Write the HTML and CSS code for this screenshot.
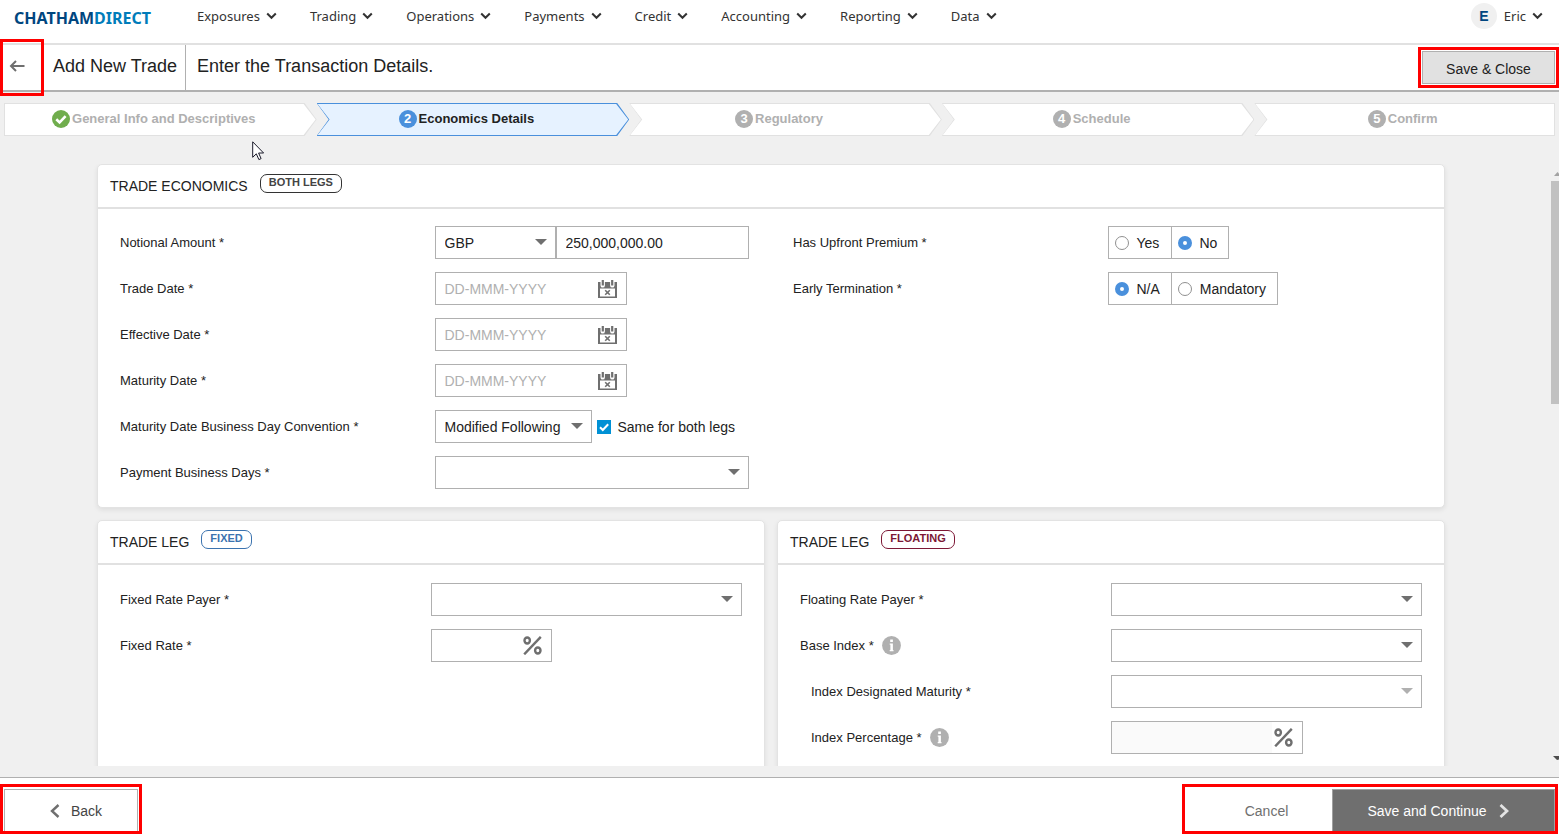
FILE: index.html
```html
<!DOCTYPE html>
<html lang="en">
<head>
<meta charset="utf-8">
<title>Add New Trade</title>
<link rel="stylesheet" href="styles.css">
</head>
<body>
<svg class="defs" aria-hidden="true">
  <symbol id="chev" viewBox="0 0 11 8"><path d="M1.2 1.5 5.5 5.8 9.8 1.5" fill="none" stroke="currentColor" stroke-width="2"/></symbol>
  <symbol id="cal" viewBox="0 0 19 18">
    <path d="M0 2h19v16H0z" fill="#6f6f6f"/>
    <path d="M2 8.500h15v8H2z" fill="#fff"/>
    <path d="M2.500 2h4.400v3.400a2.200 2.200 0 0 1-4.400 0zM12.100 2h4.400v3.400a2.200 2.200 0 0 1-4.400 0z" fill="#fff"/>
    <path d="M3.700 0h2.200v5.500H3.700zM13.100 0h2.200v5.500h-2.200z" fill="#6f6f6f"/>
    <path d="M7.200 10.200l4.600 4.600M11.800 10.200l-4.600 4.600" stroke="#6f6f6f" stroke-width="1.600"/>
  </symbol>
  <symbol id="pct" viewBox="0 0 19 19"><g fill="none" stroke="#6f6f6f" stroke-width="2.400"><ellipse cx="4.200" cy="4.500" rx="2.700" ry="3"/><ellipse cx="14.800" cy="14.500" rx="2.700" ry="3"/><path d="M1.200 18.300 17.800.8"/></g></symbol>
  <symbol id="info" viewBox="0 0 19 19"><circle cx="9.5" cy="9.5" r="9.400" fill="#b0b0b0"/><path d="M8.200 3.600h2.700v2.500H8.200zM7.700 7.600h3.200v6.500h.6v1.200H7.700v-1.200h.7V8.800h-.7z" fill="#fff"/></symbol>
</svg>

<header class="topnav">
  <a class="logo" href="#">CHATHAM<span>DIRECT</span></a>
  <nav class="menu">
    <button type="button">Exposures<svg class="chev"><use href="#chev"/></svg></button>
    <button type="button">Trading<svg class="chev"><use href="#chev"/></svg></button>
    <button type="button">Operations<svg class="chev"><use href="#chev"/></svg></button>
    <button type="button">Payments<svg class="chev"><use href="#chev"/></svg></button>
    <button type="button">Credit<svg class="chev"><use href="#chev"/></svg></button>
    <button type="button">Accounting<svg class="chev"><use href="#chev"/></svg></button>
    <button type="button">Reporting<svg class="chev"><use href="#chev"/></svg></button>
    <button type="button">Data<svg class="chev"><use href="#chev"/></svg></button>
  </nav>
  <div class="user"><span class="avatar">E</span><button type="button">Eric<svg class="chev"><use href="#chev"/></svg></button></div>
</header>

<div class="titlebar">
  <div class="back-arrow marked">
    <button type="button" aria-label="Back"><svg width="16" height="12" viewBox="0 0 16 12"><path d="M15.500 6H2M7 1 2 6l5 5" fill="none" stroke="#6f6f6f" stroke-width="2"/></svg></button>
  </div>
  <h1>Add New Trade</h1>
  <p>Enter the Transaction Details.</p>
  <div class="save-close marked"><button type="button">Save &amp; Close</button></div>
</div>

<main class="page">
  <ol class="steps">
    <li><svg width="18" height="18" viewBox="0 0 18 18"><circle cx="9" cy="9" r="9" fill="#70ad4d"/><path d="M4.300 9.200 7.600 12.400 13.600 6.200" fill="none" stroke="#fff" stroke-width="2.600"/></svg><span>General Info and Descriptives</span></li>
    <li class="current"><b>2</b><span>Economics Details</span></li>
    <li><b>3</b><span>Regulatory</span></li>
    <li><b>4</b><span>Schedule</span></li>
    <li><b>5</b><span>Confirm</span></li>
  </ol>

  <div class="scroller">
    <section class="card">
      <h2>TRADE ECONOMICS <span class="pill">BOTH LEGS</span></h2>
      <div class="fields pair">
        <div class="column">
          <div class="row">
            <label for="amount">Notional Amount *</label>
            <div class="control joined">
              <span class="select w-small"><select aria-label="Currency"><option>GBP</option></select></span>
              <input class="box" id="amount" type="text" value="250,000,000.00">
            </div>
          </div>
          <div class="row">
            <label for="trade">Trade Date *</label>
            <div class="control"><span class="box w-date"><input id="trade" type="text" placeholder="DD-MMM-YYYY"><svg class="cal"><use href="#cal"/></svg></span></div>
          </div>
          <div class="row">
            <label for="effective">Effective Date *</label>
            <div class="control"><span class="box w-date"><input id="effective" type="text" placeholder="DD-MMM-YYYY"><svg class="cal"><use href="#cal"/></svg></span></div>
          </div>
          <div class="row">
            <label for="maturity">Maturity Date *</label>
            <div class="control"><span class="box w-date"><input id="maturity" type="text" placeholder="DD-MMM-YYYY"><svg class="cal"><use href="#cal"/></svg></span></div>
          </div>
          <div class="row">
            <label for="convention">Maturity Date Business Day Convention *</label>
            <div class="control">
              <span class="select w-convention"><select id="convention"><option>Modified Following</option></select></span>
              <label class="check"><input type="checkbox" checked><svg viewBox="0 0 14 14"><path d="M3 7.200 5.800 10 11.200 4.300" fill="none" stroke="#fff" stroke-width="2"/></svg><span>Same for both legs</span></label>
            </div>
          </div>
          <div class="row">
            <label for="days">Payment Business Days *</label>
            <div class="control"><span class="select"><select id="days"><option></option></select></span></div>
          </div>
        </div>
        <div class="column">
          <div class="row" role="radiogroup" aria-labelledby="premium">
            <span id="premium">Has Upfront Premium *</span>
            <div class="control radios">
              <label><input type="radio" name="premium">Yes</label>
              <label><input type="radio" name="premium" checked>No</label>
            </div>
          </div>
          <div class="row" role="radiogroup" aria-labelledby="termination">
            <span id="termination">Early Termination *</span>
            <div class="control radios">
              <label><input type="radio" name="termination" checked>N/A</label>
              <label><input type="radio" name="termination">Mandatory</label>
            </div>
          </div>
        </div>
      </div>
    </section>

    <div class="legs">
      <section class="card">
        <h2>TRADE LEG <span class="pill fixed">FIXED</span></h2>
        <div class="fields">
          <div class="row">
            <label for="fixed-payer">Fixed Rate Payer *</label>
            <div class="control"><span class="select"><select id="fixed-payer"><option></option></select></span></div>
          </div>
          <div class="row">
            <label for="fixed-rate">Fixed Rate *</label>
            <div class="control"><span class="box w-small"><input id="fixed-rate" type="text"><svg class="pct"><use href="#pct"/></svg></span></div>
          </div>
        </div>
      </section>
      <section class="card">
        <h2>TRADE LEG <span class="pill floating">FLOATING</span></h2>
        <div class="fields">
          <div class="row">
            <label for="float-payer">Floating Rate Payer *</label>
            <div class="control"><span class="select"><select id="float-payer"><option></option></select></span></div>
          </div>
          <div class="row">
            <label for="base">Base Index *<svg class="info"><use href="#info"/></svg></label>
            <div class="control"><span class="select"><select id="base"><option></option></select></span></div>
          </div>
          <div class="row nested">
            <label for="designated">Index Designated Maturity *</label>
            <div class="control"><span class="select off"><select id="designated" disabled><option></option></select></span></div>
          </div>
          <div class="row nested">
            <label for="percentage">Index Percentage *<svg class="info"><use href="#info"/></svg></label>
            <div class="control"><span class="box w-date"><input id="percentage" type="text" disabled><svg class="pct"><use href="#pct"/></svg></span></div>
          </div>
        </div>
      </section>
    </div>
    <div class="scrollbar" aria-hidden="true">
      <svg width="8" height="4" viewBox="0 0 8 4"><path d="M3 4 6.500 0 8 1.500V4z" fill="#a3a3a3"/></svg>
      <i></i>
      <svg class="down" width="8" height="4" viewBox="0 0 8 4"><path d="M2 0h6v3.500L6 4z" fill="#4d4d4d"/></svg>
    </div>
  </div>
</main>

<footer class="footer">
  <div class="marked foot-back"><button type="button"><svg width="10" height="14" viewBox="0 0 10 14"><path d="M8.500 1 2 7l6.500 6" fill="none" stroke="#6f6f6f" stroke-width="2.400"/></svg>Back</button></div>
  <div class="marked foot-next"><button type="button" class="cancel">Cancel</button><button type="button" class="primary">Save and Continue<svg width="10" height="14" viewBox="0 0 10 14"><path d="M1.500 1 8 7l-6.500 6" fill="none" stroke="#e3e3e3" stroke-width="2.800"/></svg></button></div>
</footer>

<svg class="pointer" width="13" height="20" viewBox="0 0 13 20" aria-hidden="true"><path d="M.7.800v15.500l3.600-3.500 2.600 5.800 2.200-1-2.500-5.600h5z" fill="#fff" stroke="#1a1a2a" stroke-width="1"/></svg>
</body>
</html>
```

FILE: styles.css
```css
* { box-sizing: border-box; }

body {
  margin: 0;
  height: 100vh;
  display: flex;
  flex-direction: column;
  position: relative;
  overflow: hidden;
  background: #fff;
  color: #222;
  font: 14px/20px "Liberation Sans", Arial, sans-serif;
}

button, input, select { font: inherit; color: inherit; margin: 0; padding: 0; border: 0; background: none; border-radius: 0; }
h1, h2, p, ol { margin: 0; padding: 0; font-weight: normal; }
svg { display: block; flex: none; }
.defs { position: absolute; width: 0; height: 0; }

/* Red frames that call out a control */
.marked { position: relative; }
.marked::after { content: ""; position: absolute; inset: 0; border: 3px solid #f00; pointer-events: none; }

/* Top navigation */
.topnav {
  display: flex;
  align-items: center;
  padding: 0 16px 11px 14px;
  height: 45px;
  border-bottom: 2px solid #e1e1e1;
  font: 13px/20px "Noto Sans", sans-serif;
  color: #333;
}
.logo { flex: none; width: 183px; font-size: 16px; font-weight: 700; color: #00467f; text-decoration: none; padding-top: 3px; }
.logo span { color: #007cba; }
.menu { display: flex; gap: 33px; flex: 1; }
.topnav button { display: flex; align-items: center; gap: 6px; white-space: nowrap; }
.chev { width: 11px; height: 8px; }
.user { display: flex; align-items: center; gap: 7px; }
.avatar { width: 26px; height: 26px; border-radius: 50%; background: #f0f0f0; color: #00467f; font: 700 14px/26px "Liberation Sans", Arial, sans-serif; text-align: center; }

/* Title bar */
.titlebar { display: flex; height: 47px; border-bottom: 2px solid #b0b0b0; font-size: 18px; line-height: 42px; }
.titlebar h1 { font-size: 18px; padding: 0 8px 0 9px; border-right: 1px solid #b0b0b0; }
.titlebar p { padding-left: 11px; flex: 1; }
.back-arrow { width: 44px; z-index: 1; }
.back-arrow button { display: flex; align-items: center; width: 44px; height: 42px; padding-left: 9px; }
.back-arrow::after { inset: -6px 0; }
.save-close { align-self: flex-start; margin-top: 2px; padding: 4px; }
.save-close button { display: block; width: 133px; height: 33px; border: 1px solid #b0b0b0; background: #e1e1e1; font-size: 14px; line-height: 20px; padding-top: 2px; }

/* Stepper */
.page { flex: 1; min-height: 0; display: flex; flex-direction: column; background: #f0f0f0; padding: 11px 0; }
.steps { list-style: none; display: grid; grid-template-columns: repeat(5, 1fr); margin: 0 -8px 28px 4px; font-size: 13px; font-weight: 700; color: #b0b0b0; }
.steps li {
  --edge: #e1e1e1;
  --fill: #fff;
  position: relative;
  z-index: 0;
  display: flex;
  align-items: center;
  justify-content: center;
  gap: 2px;
  height: 33px;
  padding: 0 13px 2px 0;
  background: var(--edge);
  clip-path: polygon(0 0, calc(100% - 12px) 0, 100% 50%, calc(100% - 12px) 100%, 0 100%, 12px 50%);
}
.steps li::before {
  content: "";
  position: absolute;
  z-index: -1;
  inset: 1px;
  background: var(--fill);
  clip-path: polygon(0 0, calc(100% - 12px) 0, 100% 50%, calc(100% - 12px) 100%, 0 100%, 12px 50%);
}
.steps li:first-child, .steps li:first-child::before { clip-path: polygon(0 0, calc(100% - 12px) 0, 100% 50%, calc(100% - 12px) 100%, 0 100%); }
.steps li:last-child { margin-right: 12px; padding: 0 4px 2px 0; }
.steps li:last-child, .steps li:last-child::before { clip-path: polygon(0 0, 100% 0, 100% 100%, 0 100%, 12px 50%); }
.steps .current { --edge: #4a90dc; --fill: #e6f2ff; color: #222; }
.steps b { width: 18px; height: 18px; border-radius: 50%; background: #b0b0b0; color: #fff; line-height: 18px; text-align: center; }
.steps .current b { background: #4a90dc; }

/* Cards */
.scroller { position: relative; flex: 1; min-height: 0; overflow: hidden; padding: 0 114px 0 97px; }
.card { background: #fff; border: 1px solid #e3e3e3; border-radius: 5px; box-shadow: 0 2px 5px rgba(0, 0, 0, .08); }
.card h2 { display: flex; align-items: flex-start; gap: 12px; padding: 9px 12px 0; height: 44px; border-bottom: 2px solid #e1e1e1; font-size: 14px; line-height: 24px; }
.pill { border: 1px solid #333; border-radius: 7px; padding: 0 8px 2px; font-size: 11px; font-weight: 700; line-height: 15px; color: #444; }
.pill.fixed { border-color: #3b73af; color: #3b73af; }
.pill.floating { border-color: #7d1735; color: #7d1735; }
.legs { display: grid; grid-template-columns: 1fr 1fr; gap: 12px; margin-top: 12px; }
.legs .card { min-height: 320px; }
.legs .fields { padding: 18px 22px; }

/* Form rows */
.fields { padding: 17px 22px 18px; }
.pair { display: grid; grid-template-columns: minmax(0, 1fr) minmax(0, 1fr); gap: 44px; }
.row { display: grid; grid-template-columns: minmax(0, 1fr) minmax(0, 1fr); align-items: center; min-height: 33px; font-size: 13px; }
.row + .row { margin-top: 13px; }
.row > label { display: flex; align-items: center; gap: 8px; white-space: nowrap; }
.nested > label { padding-left: 11px; }
.control { display: flex; font-size: 14px; }
.info { width: 19px; height: 19px; }

.box, .select { border: 1px solid #b0b0b0; height: 33px; background: #fff; }
.box { display: flex; align-items: center; padding-right: 9px; min-width: 0; }
.box input { flex: 1; min-width: 0; height: 31px; padding-left: 9px; }
.box input:disabled { background: #fafafa; }
input.box { flex: 1; padding-left: 9px; }
input::placeholder { color: #b0b0b0; opacity: 1; }
.select { position: relative; flex: 1; }
.select select { display: block; appearance: none; width: 100%; height: 31px; padding: 0 28px 0 9px; }
.select::after { content: ""; position: absolute; right: 8px; top: 12px; border: 6px solid transparent; border-top-color: #6f6f6f; border-bottom: 0; pointer-events: none; }
.select.off::after { border-top-color: #b0b0b0; }
.w-small { flex: 0 0 121px; }
.w-date { flex: 0 0 192px; }
.w-convention { flex: 0 0 157px; }
.cal { width: 19px; height: 18px; }
.pct { width: 19px; height: 19px; }
.box .pct { margin-left: 2px; }

.check { position: relative; display: flex; align-items: center; gap: 7px; margin-left: 5px; white-space: nowrap; }
.check input { appearance: none; width: 14px; height: 14px; background: #0091d5; }
.check svg { position: absolute; left: 0; width: 14px; height: 14px; }

.radios label { display: flex; align-items: center; gap: 8px; height: 33px; min-width: 64px; padding: 0 11px 0 6px; border: 1px solid #b0b0b0; }
.radios label + label { margin-left: -1px; min-width: 0; }
.radios input { appearance: none; width: 14px; height: 14px; border: 1px solid #909090; border-radius: 50%; background: #fff; }
.radios input:checked { border: 5px solid #4a90dc; }

/* Scroll indicator */
.scrollbar { position: absolute; top: 8px; right: 0; bottom: 6px; width: 8px; display: flex; flex-direction: column; gap: 5px; }
.scrollbar i { height: 223px; background: #c1c1c1; }
.scrollbar .down { margin-top: auto; }

/* Footer */
.footer { display: flex; justify-content: space-between; align-items: flex-start; height: 58px; padding: 6px 1px 0 0; border-top: 1px solid #b0b0b0; }
.marked button { white-space: nowrap; }
.footer .marked { display: flex; height: 50px; padding: 5px 4px 3px; }
.footer button { display: flex; align-items: center; justify-content: center; }
.foot-back button { width: 134px; gap: 11px; border: 1px solid #b0b0b0; border-bottom: 0; color: #444; padding-left: 10px; }
.footer .foot-next { padding: 5px 3px 3px; }
.footer .cancel { width: 147px; padding: 2px 0 0 16px; color: #6f6f6f; }
.footer .primary { width: 223px; gap: 12px; padding-right: 11px; border: 1px solid #a0a0a0; border-bottom: 0; background: #6f6f6f; color: #fff; }

.pointer { position: absolute; left: 252px; top: 141px; }
```
